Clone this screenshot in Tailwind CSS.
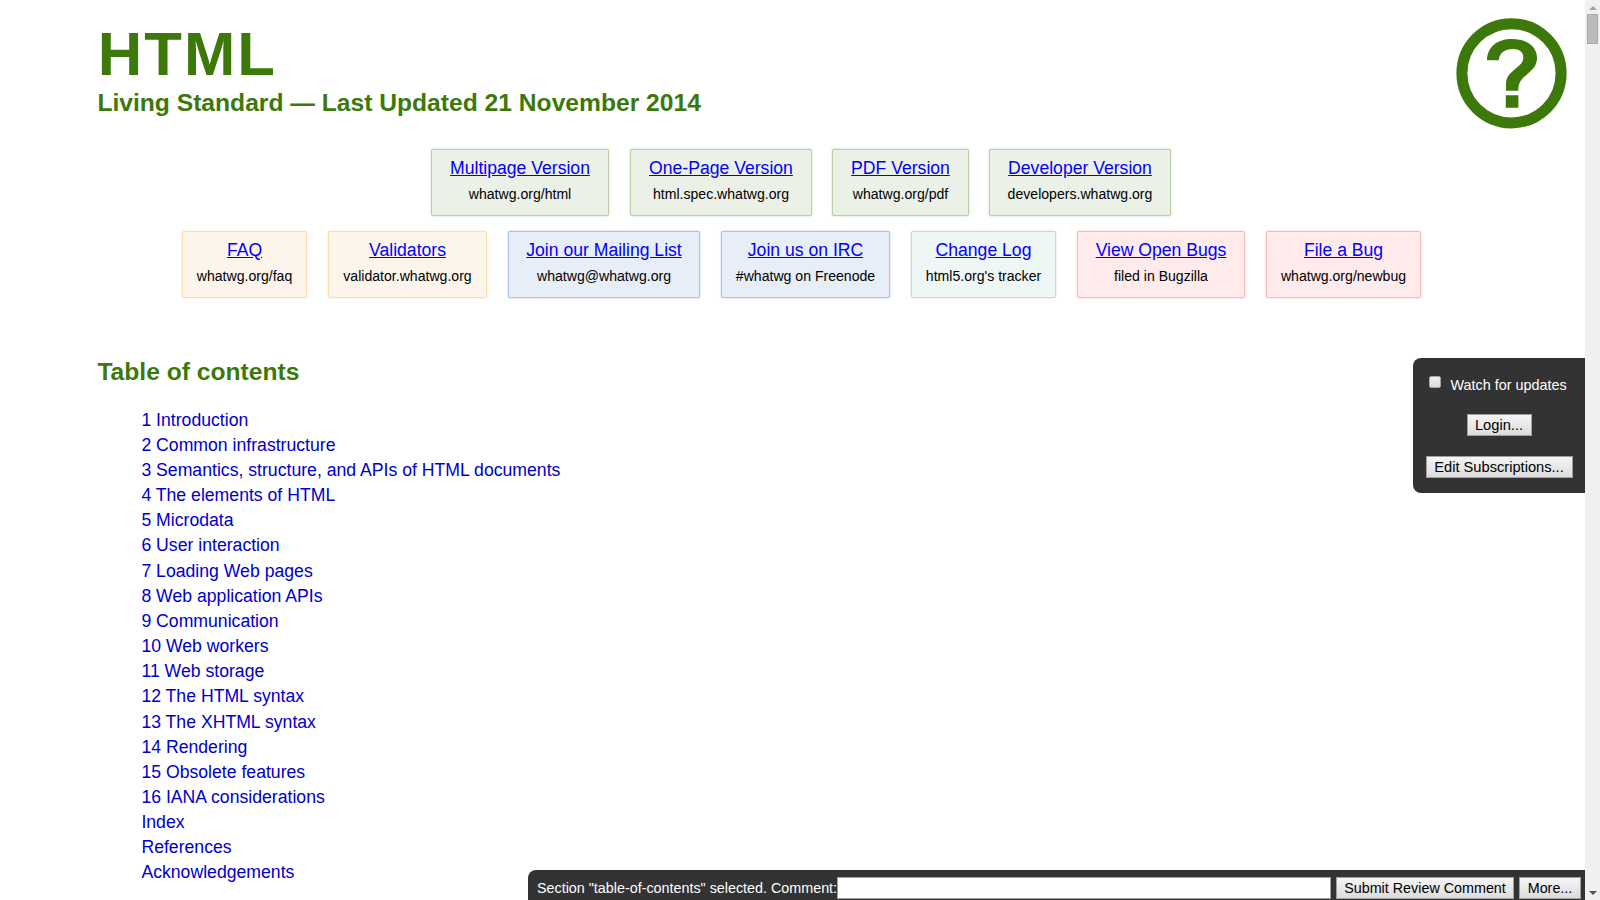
<!DOCTYPE html>
<html lang="en">
<head>
<meta charset="utf-8">
<title>HTML Standard</title>
<script src="https://cdn.jsdelivr.net/npm/@tailwindcss/browser@4"></script>
</head>
<body class="h-screen overflow-hidden bg-white font-['Liberation_Sans',Arial,sans-serif] text-black">
<div class="flex h-[900px] w-[1600px]">
  <main class="relative h-full w-[1585px] overflow-hidden">
    <header class="flex h-[149px] justify-between pl-[97.4px] pr-[18px] text-[#3c790a]">
      <div class="pt-[24px]">
        <h1 class="h-[60px] pl-[0.4px] text-[61.6px] leading-[59px] font-bold tracking-[2px]">HTML</h1>
        <p class="pt-[4px] text-[24.64px] leading-[30px] font-bold whitespace-nowrap">Living Standard — Last Updated 21 November 2014</p>
      </div>
      <svg class="mt-[18px] size-[111px]" viewBox="0 0 111 111">
        <circle cx="55.5" cy="55.3" r="49.6" fill="none" stroke="#3c790a" stroke-width="11"/>
        <path fill="#3c790a" d="M31 42.3C31.300 29 41 21 56 21C71 21 81 28.500 81 40C81 46.500 78 50.500 71.500 56C64.500 62 62.300 65 62.300 72.700H50V67C50 60 52.500 56.500 58 52C65 46.500 67.300 44 67.300 39.500C67.300 34 63.500 31 57 31C48.500 31 43.500 35 42.700 42.300ZM49.800 77.300H62.400V89.700H49.800Z"/>
      </svg>
    </header>

    <nav class="flex flex-col gap-[15px] text-center text-[14.08px] whitespace-nowrap">
      <div class="flex gap-[20px] pl-[431px]">
        <div class="mr-px h-[67px] w-[178px] rounded-[2px] border border-[#bbd0a7] bg-[#ebf1e7] pt-[5px] shadow-[0_0_2px_#bbd0a7]"><a class="block text-[17.6px] leading-[26px] text-[#0000ff] underline">Multipage Version</a><span class="block leading-[27px]">whatwg.org/html</span></div>
        <div class="h-[67px] w-[182px] rounded-[2px] border border-[#bbd0a7] bg-[#ebf1e7] pt-[5px] shadow-[0_0_2px_#bbd0a7]"><a class="block text-[17.6px] leading-[26px] text-[#0000ff] underline">One-Page Version</a><span class="block leading-[27px]">html.spec.whatwg.org</span></div>
        <div class="h-[67px] w-[137px] rounded-[2px] border border-[#bbd0a7] bg-[#ebf1e7] pt-[5px] shadow-[0_0_2px_#bbd0a7]"><a class="block text-[17.6px] leading-[26px] text-[#0000ff] underline">PDF Version</a><span class="block leading-[27px]">whatwg.org/pdf</span></div>
        <div class="h-[67px] w-[182px] rounded-[2px] border border-[#bbd0a7] bg-[#ebf1e7] pt-[5px] shadow-[0_0_2px_#bbd0a7]"><a class="block text-[17.6px] leading-[26px] text-[#0000ff] underline">Developer Version</a><span class="block leading-[27px]">developers.whatwg.org</span></div>
      </div>
      <div class="flex gap-[21px] pl-[182px]">
        <div class="h-[67px] w-[125px] rounded-[2px] border border-[#ffdcaf] bg-[#fdf5eb] pt-[5px] shadow-[0_0_2px_#ffdcaf]"><a class="block text-[17.6px] leading-[26px] text-[#0000ff] underline">FAQ</a><span class="block leading-[27px]">whatwg.org/faq</span></div>
        <div class="h-[67px] w-[159px] rounded-[2px] border border-[#ffdcaf] bg-[#fdf5eb] pt-[5px] shadow-[0_0_2px_#ffdcaf]"><a class="block text-[17.6px] leading-[26px] text-[#0000ff] underline">Validators</a><span class="block leading-[27px]">validator.whatwg.org</span></div>
        <div class="h-[67px] w-[192px] rounded-[2px] border border-[#abc3e6] bg-[#e8eef8] pt-[5px] shadow-[0_0_2px_#abc3e6]"><a class="block text-[17.6px] leading-[26px] text-[#0000ff] underline">Join our Mailing List</a><span class="block leading-[27px]">whatwg@whatwg.org</span></div>
        <div class="h-[67px] w-[169px] rounded-[2px] border border-[#abc3e6] bg-[#e8eef8] pt-[5px] shadow-[0_0_2px_#abc3e6]"><a class="block text-[17.6px] leading-[26px] text-[#0000ff] underline">Join us on IRC</a><span class="block leading-[27px]">#whatwg on Freenode</span></div>
        <div class="h-[67px] w-[145px] rounded-[2px] border border-[#bce1d7] bg-[#eff6f6] pt-[5px] shadow-[0_0_2px_#bce1d7]"><a class="block text-[17.6px] leading-[26px] text-[#0000ff] underline">Change Log</a><span class="block leading-[27px]">html5.org's tracker</span></div>
        <div class="h-[67px] w-[168px] rounded-[2px] border border-[#ffb7b7] bg-[#ffebeb] pt-[5px] shadow-[0_0_2px_#ffb7b7]"><a class="block text-[17.6px] leading-[26px] text-[#0000ff] underline">View Open Bugs</a><span class="block leading-[27px]">filed in Bugzilla</span></div>
        <div class="h-[67px] w-[155px] rounded-[2px] border border-[#ffb7b7] bg-[#ffebeb] pt-[5px] shadow-[0_0_2px_#ffb7b7]"><a class="block text-[17.6px] leading-[26px] text-[#0000ff] underline">File a Bug</a><span class="block leading-[27px]">whatwg.org/newbug</span></div>
      </div>
    </nav>

    <h2 class="mt-[57px] pl-[97.4px] text-[24.64px] leading-[34px] font-bold text-[#3c790a]">Table of contents</h2>
    <ol class="mt-[19px] pl-[141.4px] text-[17.65px] leading-[25px] text-[#0000cc]">
      <li>1 Introduction</li>
      <li>2 Common infrastructure</li>
      <li>3 Semantics, structure, and APIs of HTML documents</li>
      <li>4 The elements of HTML</li>
      <li>5 Microdata</li>
      <li>6 User interaction</li>
      <li class="mt-px">7 Loading Web pages</li>
      <li>8 Web application APIs</li>
      <li>9 Communication</li>
      <li>10 Web workers</li>
      <li>11 Web storage</li>
      <li>12 The HTML syntax</li>
      <li class="mt-px">13 The XHTML syntax</li>
      <li>14 Rendering</li>
      <li>15 Obsolete features</li>
      <li>16 IANA considerations</li>
      <li>Index</li>
      <li>References</li>
      <li>Acknowledgements</li>
    </ol>

    <aside class="absolute top-[358px] right-0 flex h-[135px] w-[172px] flex-col items-center rounded-l-[8px] bg-[#333] text-[14.4px] whitespace-nowrap text-white">
      <label class="flex w-full pt-[17px] pl-[16px]"><span class="mt-px size-[12px] rounded-[2px] border border-[#a5a5a5] bg-linear-to-b from-[#eee] to-[#dcdcdc]"></span><span class="ml-[9.5px] leading-[20px]">Watch for updates</span></label>
      <button class="mt-[19px] h-[22px] w-[65px] border border-[#a0a0a0] bg-linear-to-b from-[#f5f5f5] to-[#dcdcdc] text-[14.67px] leading-[20px] text-black">Login...</button>
      <button class="mt-[20px] h-[22px] w-[147px] border border-[#a0a0a0] bg-linear-to-b from-[#f5f5f5] to-[#dcdcdc] text-[14.67px] leading-[20px] text-black">Edit Subscriptions...</button>
    </aside>

    <footer class="absolute right-0 bottom-0 flex h-[30px] w-[1057px] rounded-tl-[8px] bg-[#333] pt-[7px] pr-[4px] pl-[9px] text-[14.33px] leading-[22px] whitespace-nowrap text-white">
      <span class="w-[300px]">Section "table-of-contents" selected. Comment:</span>
      <span class="h-[22px] w-[494px] border border-[#a0a0a0] bg-white"></span>
      <button class="ml-[5px] h-[22px] w-[178px] border border-[#a0a0a0] bg-linear-to-b from-[#f5f5f5] to-[#dcdcdc] text-[14.33px] leading-[20px] text-black">Submit Review Comment</button>
      <button class="ml-[5px] h-[22px] w-[62px] border border-[#a0a0a0] bg-linear-to-b from-[#f5f5f5] to-[#dcdcdc] text-[14.33px] leading-[20px] text-black">More...</button>
    </footer>
  </main>
  <div class="flex h-full w-[15px] flex-col items-center bg-[#f0f0f0]">
    <svg class="mt-[6px] h-[4px] w-[8px]" viewBox="0 0 8 4"><path d="M0 4L4 0L8 4Z" fill="#a3a3a3"/></svg>
    <div class="mt-[4px] h-[30px] w-[11px] border border-[#a8a8a8] bg-[#bcbcbc]"></div>
    <svg class="mt-auto mb-[5px] h-[4px] w-[8px]" viewBox="0 0 8 4"><path d="M0 0L4 4L8 0Z" fill="#505050"/></svg>
  </div>
</div>
</body>
</html>
